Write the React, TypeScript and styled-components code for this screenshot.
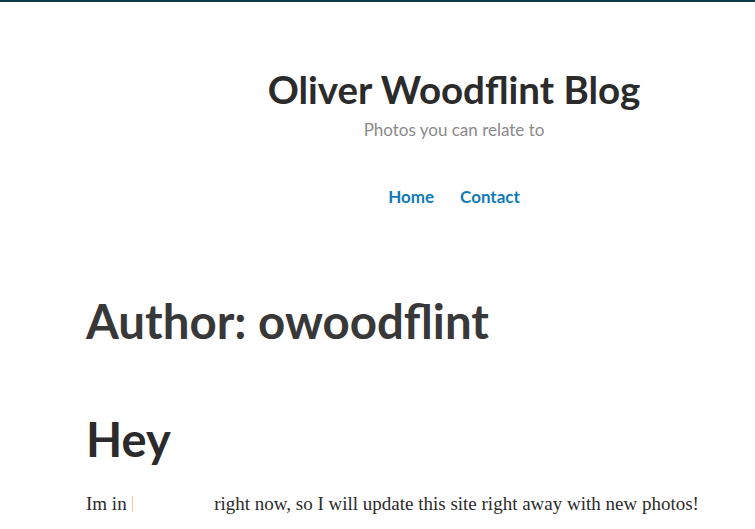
import React from "react";
import styled, { createGlobalStyle } from "styled-components";

const Global = createGlobalStyle`
  html, body { margin: 0; padding: 0; background: #fff; }
  body { font-family: "Lato", "Open Sans", sans-serif; }
`;

const TopBar = styled.div`
  height: 2px;
  background: #0b3747;
`;

const Header = styled.header`
  display: flex;
  flex-direction: column;
  align-items: center;
  padding: 63px 0 0 153px;
`;

const SiteTitle = styled.h1`
  margin: 0;
  font-family: "Lato", sans-serif;
  font-weight: 700;
  font-size: 38.5px;
  line-height: 48px;
  color: #2b2b2b;
`;

const Tagline = styled.p`
  margin: 5px 0 0;
  font-size: 17px;
  line-height: 24px;
  color: #8a8a8a;
`;

const Nav = styled.nav`
  display: flex;
  gap: 26px;
  margin-top: 43px;
`;

const NavLink = styled.a`
  font-weight: 700;
  font-size: 17px;
  line-height: 24px;
  color: #0f7ab5;
  text-decoration: none;
`;

const Main = styled.main`
  padding: 82px 0 0 86px;
`;

const PageTitle = styled.h2`
  margin: 0;
  font-weight: 700;
  font-size: 47.4px;
  line-height: 60px;
  color: #383838;
`;

const PostTitle = styled.h3`
  margin: 58px 0 0;
  font-weight: 700;
  font-size: 47px;
  line-height: 60px;
  color: #2b2b2b;
`;

const Body = styled.p`
  margin: 21px 0 0;
  font-family: "Liberation Serif", serif;
  font-size: 19px;
  line-height: 28px;
  color: #2b2b2b;
`;

const Hidden = styled.span`
  display: inline-block;
  width: 78px;
  position: relative;
  &::before {
    content: "";
    position: absolute;
    left: 1px;
    top: -14px;
    width: 1px;
    height: 16px;
    background: #f2c79a;
  }
`;

export default function App() {
  return (
    <>
      <Global />
      <TopBar />
      <Header>
        <SiteTitle>Oliver Woodflint Blog</SiteTitle>
        <Tagline>Photos you can relate to</Tagline>
        <Nav>
          <NavLink href="#">Home</NavLink>
          <NavLink href="#">Contact</NavLink>
        </Nav>
      </Header>
      <Main>
        <PageTitle>Author: owoodflint</PageTitle>
        <PostTitle>Hey</PostTitle>
        <Body>
          Im in <Hidden /> right now, so I will update this site right away with new photos!
        </Body>
      </Main>
    </>
  );
}
